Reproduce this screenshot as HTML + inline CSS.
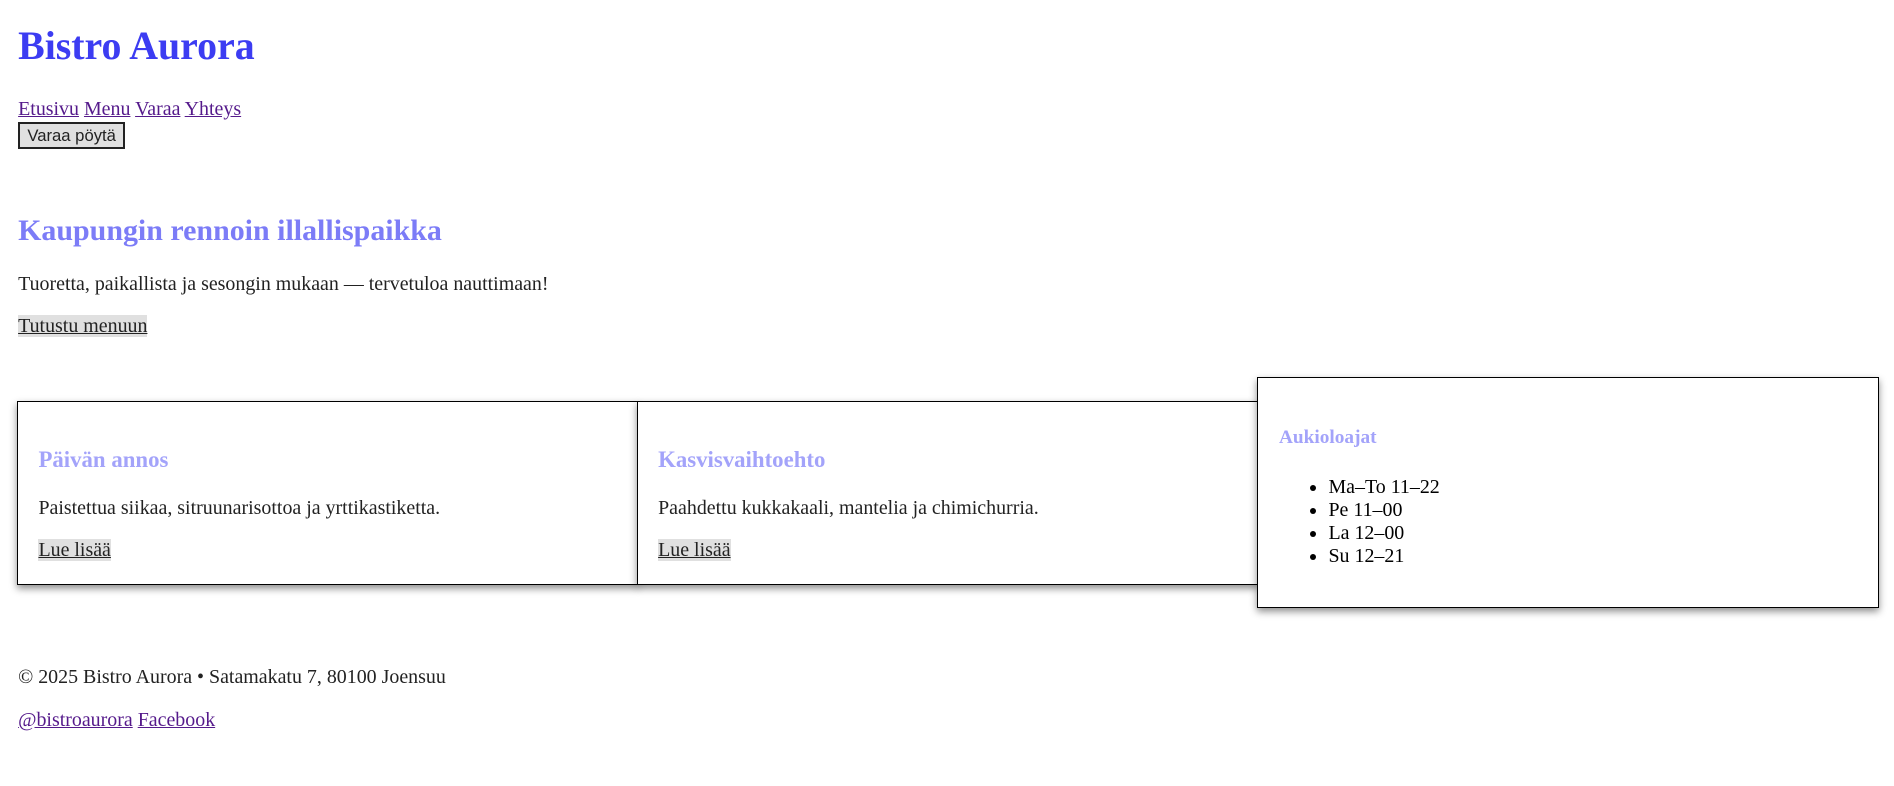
<!DOCTYPE html>
<html><head><meta charset="utf-8"><style>
html,body{margin:0;padding:0;background:#fff;}
body{zoom:1.2079;width:1568px;height:651px;position:relative;overflow:hidden;font-family:"Liberation Serif",serif;font-size:16.5px;color:#222;}
.a{position:absolute;white-space:nowrap;}
h1,h2,h3,p,ul{margin:0;}
h1{font-size:33px;color:#3c3cf2;font-weight:bold;line-height:37px;}
h2{font-size:24.8px;color:#7c7cf7;line-height:28px;}
h3{font-size:18.9px;color:#a3a3fa;line-height:22px;}
a{color:#551a8b;}
.btnl{background:#e0e0e0;color:#222;}
button{font-family:"Liberation Sans",sans-serif;font-size:13.8px;background:#e0e0e0;border:2px solid #222;padding:1px 6px;color:#222;height:22px;line-height:16px;}
.card{position:absolute;border:1px solid #000;box-shadow:0 3px 6px rgba(0,0,0,.45);background:#fff;box-sizing:border-box;}
ul{padding-left:40px;line-height:19px;color:#000;}
</style></head><body>
<h1 class="a" style="left:15px;top:20px">Bistro Aurora</h1>
<div class="a" style="left:15px;top:82px;line-height:18px"><a href="#">Etusivu</a> <a href="#">Menu</a> <a href="#">Varaa</a> <a href="#">Yhteys</a></div>
<button class="a" style="left:15px;top:101px">Varaa pöytä</button>
<h2 class="a" style="left:15px;top:177px">Kaupungin rennoin illallispaikka</h2>
<p class="a" style="left:15px;top:226px">Tuoretta, paikallista ja sesongin mukaan — tervetuloa nauttimaan!</p>
<div class="a" style="left:15px;top:262px;line-height:18px"><a href="#" class="btnl">Tutustu menuun</a></div>

<div class="card" style="left:14px;top:332px;width:515px;height:152px">
 <h3 class="a" style="left:17px;top:37px">Päivän annos</h3>
 <p class="a" style="left:17px;top:79px">Paistettua siikaa, sitruunarisottoa ja yrttikastiketta.</p>
 <div class="a" style="left:17px;top:114px;line-height:18px"><a href="#" class="btnl">Lue lisää</a></div>
</div>
<div class="card" style="left:527px;top:332px;width:515px;height:152px">
 <h3 class="a" style="left:17px;top:37px">Kasvisvaihtoehto</h3>
 <p class="a" style="left:17px;top:79px">Paahdettu kukkakaali, mantelia ja chimichurria.</p>
 <div class="a" style="left:17px;top:114px;line-height:18px"><a href="#" class="btnl">Lue lisää</a></div>
</div>
<div class="card" style="left:1041px;top:312px;width:515px;height:191px">
 <h3 class="a" style="left:17px;top:39px;font-size:16px">Aukioloajat</h3>
 <ul class="a" style="left:18px;top:81px;padding-left:40px"><li>Ma–To 11–22</li><li>Pe 11–00</li><li>La 12–00</li><li>Su 12–21</li></ul>
</div>

<p class="a" style="left:15px;top:551px">© 2025 Bistro Aurora • Satamakatu 7, 80100 Joensuu</p>
<div class="a" style="left:15px;top:588px;line-height:18px"><a href="#">@bistroaurora</a> <a href="#">Facebook</a></div>
</body></html>
